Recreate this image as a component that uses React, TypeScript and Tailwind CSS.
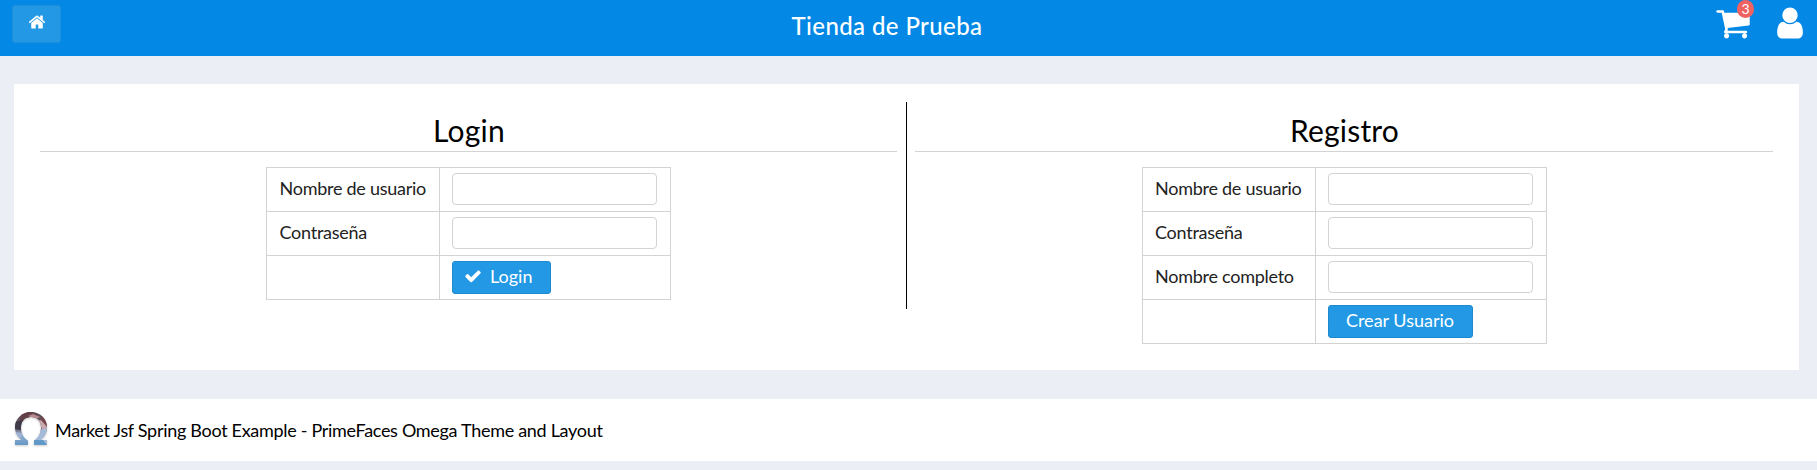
import React from "react";

const HOME =
  "M1472 992v480q0 26-19 45t-45 19h-384v-384h-256v384h-384q-26 0-45-19t-19-45v-480q0-1 .5-3t.5-3l575-474 575 474q1 2 1 6zm223-69l-62 74q-8 9-21 11h-3q-13 0-21-7l-692-577-692 577q-12 8-24 7-13-2-21-11l-62-74q-8-10-7-23.5t11-21.5l719-599q32-26 76-26t76 26l244 204v-195q0-14 9-23t23-9h192q14 0 23 9t9 23v408l219 182q10 8 11 21.5t-7 23.5z";
const CART =
  "M704 1536q0 52-38 90t-90 38-90-38-38-90 38-90 90-38 90 38 38 90zm896 0q0 52-38 90t-90 38-90-38-38-90 38-90 90-38 90 38 38 90zm128-1088v512q0 24-16.5 42.5t-40.5 21.5l-1044 122q13 60 13 70 0 16-24 64h920q26 0 45 19t19 45-19 45-45 19h-1024q-26 0-45-19t-19-45q0-11 8-31.5t16-36 21.5-40 15.5-29.5l-177-823h-204q-26 0-45-19t-19-45 19-45 45-19h256q16 0 28.5 6.5t19.5 15.5 13 24.5 8 26 5.5 29.5 4.5 26h1201q26 0 45 19t19 45z";
const USER =
  "M1536 1399q0 109-62.5 187t-150.5 78h-854q-88 0-150.5-78t-62.5-187q0-85 8.5-160.5t31.5-152 58.5-131 94-89 134.5-34.5q131 128 313 128t313-128q76 0 134.5 34.5t94 89 58.5 131 31.5 152 8.5 160.5zm-256-887q0 159-112.5 271.5t-271.5 112.5-271.5-112.5-112.5-271.5 112.5-271.5 271.5-112.5 271.5 112.5 112.5 271.5z";
const CHECK =
  "M1671 566q0 40-28 68l-724 724-136 136q-28 28-68 28t-68-28l-136-136-362-362q-28-28-28-68t28-68l136-136q28-28 68-28t68 28l294 295 656-657q28-28 68-28t68 28l136 136q28 28 28 68z";

function Icon({ d, className }: { d: string; className: string }) {
  return (
    <svg viewBox="0 0 1792 1792" fill="currentColor" className={className} aria-hidden="true">
      <path d={d} />
    </svg>
  );
}

function OmegaLogo() {
  return (
    <svg viewBox="0 0 34 38" className="h-[38px] w-[34px] shrink-0 drop-shadow-[0_1px_1px_rgba(0,0,0,0.2)]" aria-hidden="true">
      <defs>
        <linearGradient id="omega-fill" x1="0" y1="0" x2="0" y2="1">
          <stop offset="0" stopColor="#5a4048" />
          <stop offset="0.45" stopColor="#6d6674" />
          <stop offset="0.65" stopColor="#8fa9cc" />
          <stop offset="1" stopColor="#5193c4" />
        </linearGradient>
        <clipPath id="omega-shape">
          <path d="M1 29H7.5C3.5 26 1 21.500 1 16.500C1 7.500 8 1 17 1S33 7.500 33 16.500C33 21.500 30.500 26 26.500 29H33V34H20V29.500C24.500 27 27 22 27 16.500C27 10 23 6 17 6S7 10 7 16.500C7 22 9.500 27 14 29.500V34H1Z" />
        </clipPath>
      </defs>
      <g clipPath="url(#omega-shape)">
        <rect width="34" height="38" fill="url(#omega-fill)" />
        <path d="M8 1L19 1L15 8L5 12Z" fill="#624048" />
        <path d="M19 3L26 6L22 8L14 5Z" fill="#b98a8d" />
        <path d="M0 11L10 9L7 19L0 18Z" fill="#3f3a48" />
        <path d="M24 9L34 10V19L29 20Z" fill="#c9a9ae" />
        <path d="M28 3L34 12L33 16L27 9Z" fill="#73454d" />
        <path d="M25 19L34 17V34H18V29Z" fill="#a6bbd8" />
        <path d="M19 29H29L33 34H19Z" fill="#6099c8" />
        <path d="M0 21L9 22L6 28Z" fill="#9eb2d2" />
      </g>
    </svg>
  );
}

const BUTTON =
  "flex h-[33px] items-center rounded-[3px] border border-[#1f89ce] bg-[#2399e5] pb-[3px] text-[18px] leading-[22px] text-white";

function Form({
  title,
  fields,
  button,
  className,
}: {
  title: string;
  fields: string[];
  button: React.ReactNode;
  className: string;
}) {
  const cell = "h-[44px] border border-[#d3d3d3] p-0 align-middle";
  return (
    <section className={`flex flex-col items-center ${className}`}>
      <h1 className="h-[50px] w-full border-b border-[#d3d3d3] pl-px pt-[10px] text-center text-[30px] leading-[36px] tracking-[0.2px] text-black">
        {title}
      </h1>
      <table className="mt-[15px] w-[405px] table-fixed border-collapse text-[18px] leading-[22px] text-[#222222]">
        <colgroup>
          <col className="w-[173px]" />
          <col />
        </colgroup>
        <tbody>
          {fields.map((field) => (
            <tr key={field}>
              <td className={cell}>
                <label className="block pb-[3px] pl-[12.5px] tracking-[-0.26px]">{field}</label>
              </td>
              <td className={cell}>
                <div className="pb-[2px] pl-[12px]">
                  <input
                    aria-label={field}
                    className="block h-[32px] w-[205px] rounded-[4px] border border-[#d3d3d3] bg-white px-2 outline-none"
                  />
                </div>
              </td>
            </tr>
          ))}
          <tr>
            <td className={cell} />
            <td className={cell}>
              <div className="pl-[12px]">{button}</div>
            </td>
          </tr>
        </tbody>
      </table>
    </section>
  );
}

export default function App() {
  return (
    <div className="flex h-[470px] w-[1817px] flex-col bg-[#ebeff5] font-['Lato',sans-serif] text-black">
      <header className="flex h-[56px] shrink-0 items-start justify-between bg-[#0388e5] pl-[11.5px] text-white">
        <button className="mt-[5px] flex h-[38px] w-[49px] items-start rounded-[3px] border border-[#1f8fdb] bg-[#2399e5] pl-[15px] pt-[7px]">
          <Icon d={HOME} className="size-[18px]" />
        </button>
        <div className="-ml-px pt-[11px] text-[24px] font-medium leading-[30px] tracking-[0.4px]">Tienda de Prueba</div>
        <div className="mt-[4.5px] flex gap-[21px] pr-[9.5px]">
          <div className="relative">
            <Icon d={CART} className="size-[36px]" />
            <span className="absolute -top-[5px] left-[22.500px] flex h-[18px] w-[17px] items-center justify-center rounded-full bg-[#ef6262] text-[14px] leading-none">
              3
            </span>
          </div>
          <Icon d={USER} className="size-[36px]" />
        </div>
      </header>
      <main className="mx-[14px] mr-[18px] mt-[28px] flex h-[286px] shrink-0 bg-white pl-[26px] pr-[26px] pt-[18px]">
        <Form
          className="w-[857px]"
          title="Login"
          fields={["Nombre de usuario", "Contraseña"]}
          button={
            <button className={`${BUTTON} w-[99px] pl-[10.5px]`}>
              <Icon d={CHECK} className="mr-[8.5px] size-[18px]" />
              Login
            </button>
          }
        />
        <div className="ml-[9px] mr-[8px] h-[207px] w-px bg-black" />
        <Form
          className="w-[858px]"
          title="Registro"
          fields={["Nombre de usuario", "Contraseña", "Nombre completo"]}
          button={<button className={`${BUTTON} w-[145px] justify-center`}>Crear Usuario</button>}
        />
      </main>
      <footer className="mt-[29px] flex h-[62px] shrink-0 items-center bg-white pl-[14px] text-[18px] leading-[22px]">
        <OmegaLogo />
        <span className="ml-[7px] tracking-[-0.3px]">
          Market Jsf Spring Boot Example - PrimeFaces Omega Theme and Layout
        </span>
      </footer>
    </div>
  );
}
